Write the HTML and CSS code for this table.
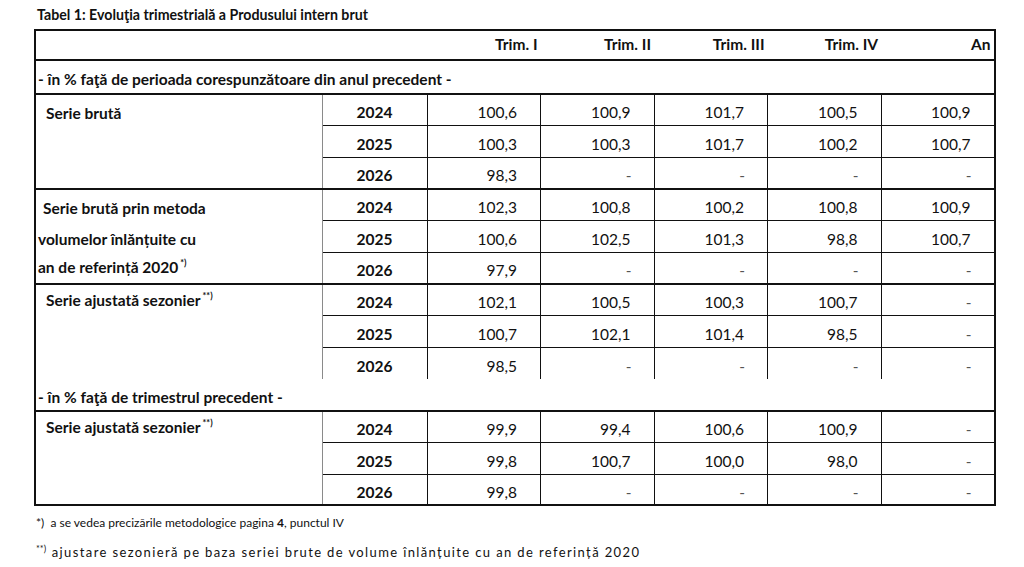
FILE: index.html
```html
<!DOCTYPE html>
<html lang="ro">
<head>
<meta charset="utf-8">
<title>Tabel 1</title>
<link rel="stylesheet" href="styles.css">
</head>
<body>
<div class="page">
  <div class="title">Tabel 1: Evoluţia trimestrială a Produsului intern brut</div>
  <table class="gdp">
    <colgroup>
      <col class="c-label"><col class="c-year"><col class="c-val"><col class="c-val"><col class="c-val"><col class="c-val"><col class="c-val">
    </colgroup>
    <tr class="head">
      <td></td><td></td><th>Trim. I</th><th>Trim. II</th><th>Trim. III</th><th>Trim. IV</th><th>An</th>
    </tr>
    <tr class="section"><td colspan="7">- în % faţă de perioada corespunzătoare din anul precedent -</td></tr>

    <tr class="r first">
      <td class="lbl ind">Serie brută</td><td class="yr">2024</td>
      <td class="v">100,6</td><td class="v">100,9</td><td class="v">101,7</td><td class="v">100,5</td><td class="v">100,9</td>
    </tr>
    <tr class="r">
      <td class="lbl"></td><td class="yr">2025</td>
      <td class="v">100,3</td><td class="v">100,3</td><td class="v">101,7</td><td class="v">100,2</td><td class="v">100,7</td>
    </tr>
    <tr class="r">
      <td class="lbl"></td><td class="yr">2026</td>
      <td class="v">98,3</td><td class="v d">-</td><td class="v d">-</td><td class="v d">-</td><td class="v d">-</td>
    </tr>

    <tr class="r first">
      <td class="lbl ind2">Serie brută prin metoda</td><td class="yr">2024</td>
      <td class="v">102,3</td><td class="v">100,8</td><td class="v">100,2</td><td class="v">100,8</td><td class="v">100,9</td>
    </tr>
    <tr class="r">
      <td class="lbl">volumelor înlănțuite cu</td><td class="yr">2025</td>
      <td class="v">100,6</td><td class="v">102,5</td><td class="v">101,3</td><td class="v">98,8</td><td class="v">100,7</td>
    </tr>
    <tr class="r">
      <td class="lbl">an de referință 2020<sup>*)</sup></td><td class="yr">2026</td>
      <td class="v">97,9</td><td class="v d">-</td><td class="v d">-</td><td class="v d">-</td><td class="v d">-</td>
    </tr>

    <tr class="r first">
      <td class="lbl ind">Serie ajustată sezonier<sup>**)</sup></td><td class="yr">2024</td>
      <td class="v">102,1</td><td class="v">100,5</td><td class="v">100,3</td><td class="v">100,7</td><td class="v d">-</td>
    </tr>
    <tr class="r">
      <td class="lbl"></td><td class="yr">2025</td>
      <td class="v">100,7</td><td class="v">102,1</td><td class="v">101,4</td><td class="v">98,5</td><td class="v d">-</td>
    </tr>
    <tr class="r">
      <td class="lbl"></td><td class="yr">2026</td>
      <td class="v">98,5</td><td class="v d">-</td><td class="v d">-</td><td class="v d">-</td><td class="v d">-</td>
    </tr>

    <tr class="section s2"><td colspan="7">- în % faţă de trimestrul precedent -</td></tr>

    <tr class="r first">
      <td class="lbl ind">Serie ajustată sezonier<sup>**)</sup></td><td class="yr">2024</td>
      <td class="v">99,9</td><td class="v">99,4</td><td class="v">100,6</td><td class="v">100,9</td><td class="v d">-</td>
    </tr>
    <tr class="r">
      <td class="lbl"></td><td class="yr">2025</td>
      <td class="v">99,8</td><td class="v">100,7</td><td class="v">100,0</td><td class="v">98,0</td><td class="v d">-</td>
    </tr>
    <tr class="r last">
      <td class="lbl"></td><td class="yr">2026</td>
      <td class="v">99,8</td><td class="v d">-</td><td class="v d">-</td><td class="v d">-</td><td class="v d">-</td>
    </tr>
  </table>
  <div class="notes">
    <p class="note1">*)&nbsp; a se vedea precizările metodologice pagina <span class="b">4</span>, punctul IV</p>
    <p class="note2"><sup>**)</sup> ajustare sezonieră pe baza seriei brute de volume înlănțuite cu an de referință 2020</p>
  </div>
</div>
</body>
</html>
```

FILE: styles.css
```css
html, body {
  margin: 0;
  padding: 0;
  background: #fff;
}
body {
  font-family: Lato, "Open Sans", "Liberation Sans", sans-serif;
  color: #111;
}
.page {
  padding: 7px 0 0 34px;
  width: 959px;
}
.title {
  font-weight: 700;
  font-size: 14.2px;
  line-height: 16px;
  height: 22px;
  padding-left: 3px;
}
.gdp {
  border-collapse: collapse;
  table-layout: fixed;
  width: 959px;
  border: 2px solid #111;
  font-size: 15.5px;
}
.c-label { width: 287px; }
.c-year { width: 105px; }
.c-val { width: 113.5px; }

.gdp td, .gdp th {
  padding: 0;
  white-space: nowrap;
  box-sizing: border-box;
  line-height: 18px;
}
.head th, .head td {
  height: 30px;
  font-weight: 700;
  text-align: right;
  padding-right: 3px;
  padding-bottom: 3px;
  border-bottom: 2px solid #111;
}
.section td {
  height: 34px;
  font-weight: 700;
  text-align: left;
  padding-left: 2px;
  vertical-align: bottom;
  padding-bottom: 5px;
  border-bottom: 2px solid #111;
}
.section.s2 td {
  height: 32px;
  padding-bottom: 4px;
}
.r td {
  height: 31.7px;
  vertical-align: bottom;
  padding-bottom: 4px;
}
.r.first td {
  border-top: 2px solid #111;
}
.r.last td {
  height: 30px;
  padding-bottom: 3px;
}
.lbl {
  font-weight: 700;
  padding-left: 2px !important;
  border-right: 1px solid #8a8a8a;
}
.lbl.ind { padding-left: 10px !important; }
.lbl.ind2 { padding-left: 7px !important; }
.lbl sup {
  font-size: 9px;
  vertical-align: 0;
  position: relative;
  top: -7px;
  margin-left: 2px;
}
.yr {
  font-weight: 700;
  text-align: center;
  border-top: 1px solid #111;
  border-right: 1px solid #111;
}
.v {
  text-align: right;
  padding-right: 23px !important;
  border-top: 1px solid #111;
  border-right: 1px solid #111;
}
.r.first .yr, .r.first .v { border-top: 2px solid #111; }
.v.d { padding-right: 22px !important; color: #555; }

.notes {
  line-height: 16px;
  padding-top: 9px;
}
.notes p {
  margin: 0;
  padding-left: 2px;
}
.note1 {
  height: 29px;
  font-size: 12px;
}
.note2 {
  font-size: 13px;
  letter-spacing: 1.38px;
}
.b { font-weight: 700; }
.note2 sup {
  font-size: 9px;
  letter-spacing: 0;
  vertical-align: 0;
  position: relative;
  top: -5px;
  margin-right: 1px;
}
```
